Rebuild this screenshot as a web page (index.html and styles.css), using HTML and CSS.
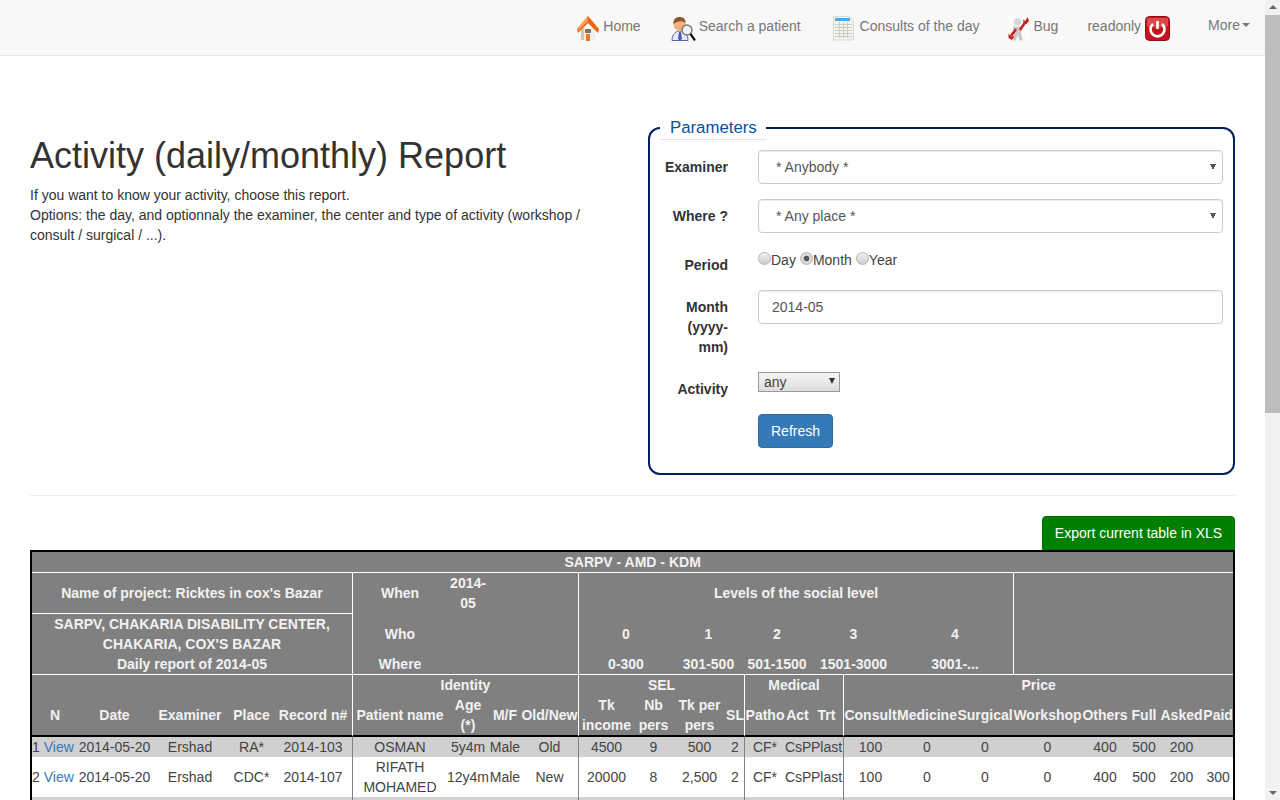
FILE: index.html
```html
<!DOCTYPE html>
<html>
	<head>
		<title>Activity report</title>
		<meta charset="UTF-8">
		<link rel="stylesheet" href="styles.css">
	</head>
	<body>
		<div class="page">
			<!-- top menu -->
			<nav class="navbar">
				<a class="nav-link" href="#">
					<svg class="nav-icon" width="22" height="25" viewBox="0 0 22 25">
						<path d="M4 12 H18 V24 H4 Z" fill="#f4eee4"/>
						<path d="M4 12 H7 V24 H4 Z" fill="#cfc6b8"/>
						<rect x="9" y="18" width="4" height="7" fill="#e8792c"/>
						<rect x="8" y="13" width="6" height="4" rx="1" fill="#85705f"/>
						<path d="M11 0 L0 13 L1 17 L11 7 L21 17 L22 13 Z" fill="#f0640f"/>
						<path d="M11 0 L0 13 L1 15 L11 5 Z" fill="#fb9d55"/>
					</svg>
					Home
				</a>
				<a class="nav-link gap3" href="#">
					<svg class="nav-icon" width="25" height="25" viewBox="0 0 25 25">
						<path d="M1 24.5 C1 18 5 15 9 15 C13 15 17 18 17 24.5 Z" fill="#e6e8f6" stroke="#5a62b0" stroke-width="1"/>
						<path d="M8 16 L10 16 L11 23 L9 24.5 L7 23 Z" fill="#4a56b8"/>
						<ellipse cx="8.5" cy="8" rx="6" ry="7" fill="#f2b27a"/>
						<path d="M2.5 8 C2 2 6 1 9 1 C13 1 15 4 14.5 7 C11 4 6 5 2.5 8 Z" fill="#8a5a2a"/>
						<circle cx="16" cy="14" r="5" fill="#eef2f4" stroke="#777" stroke-width="1.4"/>
						<path d="M19.5 18 L24 24.5" stroke="#111" stroke-width="2.2"/>
					</svg>
					Search a patient
				</a>
				<a class="nav-link gap5 link-consults" href="#">
					<svg class="nav-icon" width="23" height="25" viewBox="0 0 23 25">
						<path d="M1.5 0.5 H17 L21.5 4.5 V24 H1.5 Z" fill="#f4f4ee" stroke="#d8d8d0"/>
						<rect x="3" y="2" width="15" height="3" fill="#4aa8ee"/>
						<path d="M3 8.5 H20 M3 11.5 H20 M3 14.5 H20 M3 17.5 H20 M3 20.5 H20 M7.5 6 V22 M11.5 6 V22 M15.5 6 V22" stroke="#cdcdc4" stroke-width="1" fill="none"/>
					</svg>
					Consults of the day
				</a>
				<a class="nav-link link-tight" href="#">
					<svg class="nav-icon" width="21" height="25" viewBox="0 0 21 25">
						<rect width="21" height="25" fill="#fcfcfc"/>
						<circle cx="9.5" cy="6" r="3.8" fill="#d8d8d8"/>
						<path d="M5 10.5 H14 L13 17 L15 24.5 H11.5 L9.5 19 L8 24.5 H4.5 L6.5 17 Z" fill="#c9c9c9"/>
						<path d="M12 14 L18 5" stroke="#c8201c" stroke-width="2.6"/>
						<path d="M15 3 L17 5.5 L19.5 1 L21 5 L18.5 8 L15.5 6.5 Z" fill="#c8201c"/>
						<path d="M8 13 L3 20" stroke="#c8201c" stroke-width="2.6"/>
						<path d="M0.5 17.5 L3 20.5 L6.5 20 L4 24 L0.5 22 Z" fill="#c8201c"/>
					</svg>
					Bug
				</a>
				<a class="nav-link link-tight" href="#">
					readonly
					<svg class="nav-icon" width="25" height="25" viewBox="0 0 25 25">
						<rect x="0.5" y="0.5" width="24" height="24" rx="4" fill="#c4161c" stroke="#8d1014"/>
						<path d="M2 2 H23 V10 C15 12 9 12 2 10 Z" fill="#dd4a4c"/>
						<path d="M8 8 A7 7 0 1 0 17 8" fill="none" stroke="#fff" stroke-width="2.6"/>
						<path d="M12.5 5 V13" stroke="#fff" stroke-width="2.6"/>
					</svg>
				</a>
				<a class="nav-link nav-more" href="#">More<span class="caret"></span></a>
			</nav>

			<div class="content">
				<div class="top-row">
					<div class="intro">
						<h1>Activity (daily/monthly) Report</h1>
						<p>If you want to know your activity, choose this report.<br>Options: the day, and optionnaly the examiner, the center and type of activity (workshop / consult / surgical / ...).</p>
					</div>

					<fieldset class="params">
						<legend>Parameters</legend>
						<div class="form-row">
							<label>Examiner</label>
							<select class="form-control select-control"><option>* Anybody *</option></select>
						</div>
						<div class="form-row">
							<label>Where ?</label>
							<select class="form-control select-control"><option>* Any place *</option></select>
						</div>
						<div class="form-row">
							<label>Period</label>
							<div class="radios">
								<input type="radio" name="period" class="radio"><span class="radio-text">Day</span>
								<input type="radio" name="period" class="radio" checked><span class="radio-text">Month</span>
								<input type="radio" name="period" class="radio"><span class="radio-text">Year</span>
							</div>
						</div>
						<div class="form-row">
							<label>Month (yyyy-mm)</label>
							<input class="form-control month-input" type="text" value="2014-05">
						</div>
						<div class="form-row">
							<label>Activity</label>
							<div class="small-select">any<span class="small-arrow"></span></div>
						</div>
						<div class="form-row">
							<span></span>
							<button class="btn-refresh">Refresh</button>
						</div>
					</fieldset>
				</div>

				<hr>

				<div class="export-row">
					<button class="btn-export">Export current table in XLS</button>
				</div>

				<table class="report">
					<colgroup>
						<col class="w46"><col class="w73"><col class="w78"><col class="w45"><col class="w78">
						<col class="w95"><col class="w42"><col class="w32"><col class="w57">
						<col class="w56"><col class="w39"><col class="w53"><col class="w18">
						<col class="w41"><col class="w25"><col class="w33">
						<col class="w54"><col class="w60"><col class="w56"><col class="w69"><col class="w46"><col class="w32"><col class="w43"><col class="w30">
					</colgroup>
					<thead>
						<tr>
							<th colspan="24" class="line-b">SARPV - AMD - KDM</th>
						</tr>
						<tr class="when-row">
							<th colspan="5" class="line-b">Name of project: Ricktes in cox's Bazar</th>
							<th class="line-l">When</th>
							<th>2014-05</th>
							<th colspan="2"></th>
							<th colspan="10" class="line-l">Levels of the social level</th>
							<th colspan="5" rowspan="3" class="line-l line-b"></th>
						</tr>
						<tr class="who-row">
							<th colspan="5" rowspan="2" class="line-b">SARPV, CHAKARIA DISABILITY CENTER, CHAKARIA, COX'S BAZAR<br>Daily report of 2014-05</th>
							<th class="line-l">Who</th>
							<th colspan="3"></th>
							<th colspan="2" class="line-l">0</th>
							<th colspan="2">1</th>
							<th colspan="2">2</th>
							<th colspan="2">3</th>
							<th colspan="2">4</th>
						</tr>
						<tr>
							<th class="line-l line-b">Where</th>
							<th colspan="3" class="line-b"></th>
							<th colspan="2" class="line-l line-b">0-300</th>
							<th colspan="2" class="line-b">301-500</th>
							<th colspan="2" class="line-b">501-1500</th>
							<th colspan="2" class="line-b">1501-3000</th>
							<th colspan="2" class="line-b">3001-...</th>
						</tr>
						<tr>
							<th colspan="5"></th>
							<th colspan="4" class="line-l">Identity</th>
							<th colspan="4" class="line-l">SEL</th>
							<th colspan="3" class="line-l">Medical</th>
							<th colspan="8" class="line-l">Price</th>
						</tr>
						<tr class="names">
							<th>N</th><th>Date</th><th>Examiner</th><th>Place</th><th>Record n#</th>
							<th class="line-l">Patient name</th><th>Age (*)</th><th>M/F</th><th>Old/New</th>
							<th class="line-l">Tk income</th><th>Nb pers</th><th>Tk per pers</th><th>SL</th>
							<th class="line-l">Patho</th><th>Act</th><th>Trt</th>
							<th class="line-l">Consult</th><th>Medicine</th><th>Surgical</th><th>Workshop</th><th>Others</th><th>Full</th><th>Asked</th><th>Paid</th>
						</tr>
					</thead>
					<tbody>
						<tr class="odd">
							<td class="num">1 <a href="#">View</a></td><td>2014-05-20</td><td>Ershad</td><td>RA*</td><td>2014-103</td>
							<td class="sep">OSMAN</td><td>5y4m</td><td>Male</td><td>Old</td>
							<td class="sep">4500</td><td>9</td><td>500</td><td>2</td>
							<td class="sep">CF*</td><td>CsP</td><td>Plast</td>
							<td class="sep">100</td><td>0</td><td>0</td><td>0</td><td>400</td><td>500</td><td>200</td><td></td>
						</tr>
						<tr>
							<td class="num">2 <a href="#">View</a></td><td>2014-05-20</td><td>Ershad</td><td>CDC*</td><td>2014-107</td>
							<td class="sep">RIFATH MOHAMED</td><td>12y4m</td><td>Male</td><td>New</td>
							<td class="sep">20000</td><td>8</td><td>2,500</td><td>2</td>
							<td class="sep">CF*</td><td>CsP</td><td>Plast</td>
							<td class="sep">100</td><td>0</td><td>0</td><td>0</td><td>400</td><td>500</td><td>200</td><td>300</td>
						</tr>
						<tr class="odd filler">
							<td colspan="5"></td><td colspan="4" class="sep"></td><td colspan="4" class="sep"></td><td colspan="3" class="sep"></td><td colspan="8" class="sep"></td>
						</tr>
					</tbody>
				</table>
			</div>
		</div>

		<!-- scrollbar of the window -->
		<div class="scrollbar">
			<span class="arrow-up"></span>
			<div class="thumb"></div>
			<span class="arrow-down"></span>
		</div>
	</body>
</html>
```

FILE: styles.css
```css
* {
	box-sizing: border-box;
}

html, body {
	height: 100%;
}

body {
	margin: 0;
	display: flex;
	overflow: hidden;
	font-family: "Liberation Sans", Arial, sans-serif;
	font-size: 14px;
	line-height: 20px;
	color: #333;
	background: #fff;
}

.page {
	width: 1265px;
	flex: none;
}

/* top menu */
.navbar {
	display: flex;
	justify-content: flex-end;
	align-items: center;
	height: 56px;
	padding-bottom: 3px;
	background-color: #f8f8f8;
	border-bottom: 1px solid #e7e7e7;
}

.nav-link {
	display: flex;
	align-items: center;
	gap: 4px;
	padding: 0 15px;
	color: #777;
	text-decoration: none;
	white-space: nowrap;
}

.gap5 {
	gap: 5px;
}

.gap3 {
	gap: 3px;
}

.link-tight {
	padding-left: 14px;
}

.link-consults {
	padding-left: 16px;
}

.nav-icon {
	flex: none;
	margin-top: 4px;
}

.nav-more {
	margin-left: 8px;
	gap: 2px;
	margin-top: -2px;
}

.caret {
	display: inline-block;
	width: 0;
	height: 0;
	border-top: 4px solid #777;
	border-left: 4px solid transparent;
	border-right: 4px solid transparent;
}

.content {
	padding: 0 30px;
}

.top-row {
	display: flex;
	gap: 31px;
	padding-top: 60px;
}

.intro {
	width: 587px;
	flex: none;
	padding-top: 20px;
}

h1 {
	margin: 0 0 9px;
	font-size: 36px;
	font-weight: 500;
	line-height: 40px;
	font-family: "Liberation Sans", Arial, sans-serif;
}

.intro p {
	margin: 0;
}

/* form */
.params {
	width: 587px;
	flex: none;
	margin: 0;
	padding: 0 10px 10px;
	border: 2px solid #002060;
	border-radius: 12px;
}

.params legend {
	width: 106px;
	padding: 1px 10px 0;
	font-size: 16.8px;
	line-height: 22px;
	color: #0b4f9c;
	border-bottom: 1px solid #e5e5e5;
	margin-bottom: 10px;
}

.form-row {
	display: grid;
	grid-template-columns: 68px 465px;
	column-gap: 30px;
	margin-bottom: 15px;
	align-items: start;
}

.form-row label {
	padding-top: 7px;
	font-weight: bold;
	text-align: right;
}

.form-control {
	width: 465px;
	height: 34px;
	padding: 6px 12px 6px 17px;
	font-family: "Liberation Sans", Arial, sans-serif;
	font-size: 14px;
	line-height: 20px;
	color: #555;
	background-color: #fff;
	border: 1px solid #ccc;
	border-radius: 4px;
	box-shadow: inset 0 1px 1px rgba(0, 0, 0, 0.075);
}

/* small filled triangle in place of the native arrow */
.select-control {
	appearance: none;
	background-image: linear-gradient(to top right, transparent 50%, #555 50%), linear-gradient(to top left, transparent 50%, #555 50%);
	background-size: 3px 6px;
	background-position: 451px 13px, 454px 13px;
	background-repeat: no-repeat;
}

.month-input {
	padding-left: 13px;
}

.radios {
	display: flex;
	align-items: flex-start;
	padding-top: 2px;
}

.radio {
	appearance: none;
	width: 13px;
	height: 13px;
	margin: 2px 0 0 0;
	border: 1px solid #b4b4b4;
	border-radius: 50%;
	background: linear-gradient(#f0f0f0, #cdcdcd);
}

.radio:checked {
	background: radial-gradient(circle, #555 0, #555 2.5px, #ddd 3.2px, #ccc 100%);
}

.radio-text {
	margin-right: 4px;
	color: #444;
}

.small-select {
	position: relative;
	width: 82px;
	height: 20px;
	padding-left: 5px;
	line-height: 18px;
	color: #444;
	border: 1px solid #999;
	background: linear-gradient(#f6f6f6, #dcdcdc);
}

.small-arrow {
	position: absolute;
	right: 4px;
	top: 5px;
	width: 0;
	height: 0;
	border-top: 6px solid #333;
	border-left: 3px solid transparent;
	border-right: 3px solid transparent;
}

.btn-refresh {
	width: 75px;
	height: 34px;
	font-family: "Liberation Sans", Arial, sans-serif;
	font-size: 14px;
	color: #fff;
	background-color: #337ab7;
	border: 1px solid #2e6da4;
	border-radius: 4px;
}

hr {
	margin: 20px 0;
	border: 0;
	border-top: 1px solid #eee;
}

.export-row {
	display: flex;
	justify-content: flex-end;
}

.btn-export {
	width: 193px;
	height: 34px;
	font-family: "Liberation Sans", Arial, sans-serif;
	font-size: 14px;
	color: #fff;
	background-color: #008000;
	border: 1px solid #007000;
	border-radius: 4px 4px 0 0;
}

/* report table */
.report {
	width: 1205px;
	table-layout: fixed;
	border-collapse: separate;
	border-spacing: 0;
	border: 2px solid #000;
}

.w18 { width: 18px; }
.w25 { width: 25px; }
.w30 { width: 30px; }
.w32 { width: 32px; }
.w33 { width: 33px; }
.w39 { width: 39px; }
.w41 { width: 41px; }
.w42 { width: 42px; }
.w43 { width: 43px; }
.w45 { width: 45px; }
.w46 { width: 46px; }
.w53 { width: 53px; }
.w54 { width: 54px; }
.w56 { width: 56px; }
.w57 { width: 57px; }
.w60 { width: 60px; }
.w69 { width: 69px; }
.w73 { width: 73px; }
.w78 { width: 78px; }
.w95 { width: 95px; }

.report th {
	padding: 0;
	font-weight: bold;
	text-align: center;
	vertical-align: middle;
	color: #f2f2f2;
	background-color: #808080;
}

.report .line-b {
	border-bottom: 1px solid #fff;
}

.report .line-l {
	border-left: 1px solid #fff;
}

.when-row th {
	height: 41px;
}

.who-row th {
	height: 40px;
}

/* text of these two rows sits one pixel above the middle */
.when-row th:not(.line-b),
.who-row th:not(.line-b) {
	padding-bottom: 1px;
}

.names th {
	border-bottom: 2px solid #000;
}

.report td {
	padding: 0;
	text-align: center;
	vertical-align: middle;
	color: #444;
	background-color: #fff;
}

.report .odd td {
	background-color: #d0d0d0;
}

.report .sep {
	border-left: 1px solid #808080;
}

.report .num {
	text-align: left;
}

.report a {
	color: #337ab7;
	text-decoration: none;
}

.filler td {
	height: 40px;
}

/* scrollbar */
.scrollbar {
	position: relative;
	width: 15px;
	flex: none;
	background-color: #f1f1f1;
}

.thumb {
	position: absolute;
	top: 15px;
	left: 0;
	width: 15px;
	height: 398px;
	background-color: #bdbdbd;
}

.arrow-up, .arrow-down {
	position: absolute;
	left: 4px;
	width: 0;
	height: 0;
	border-left: 4px solid transparent;
	border-right: 4px solid transparent;
}

.arrow-up {
	top: 5px;
	border-bottom: 4px solid #666;
}

.arrow-down {
	bottom: 5px;
	border-top: 4px solid #666;
}
```
